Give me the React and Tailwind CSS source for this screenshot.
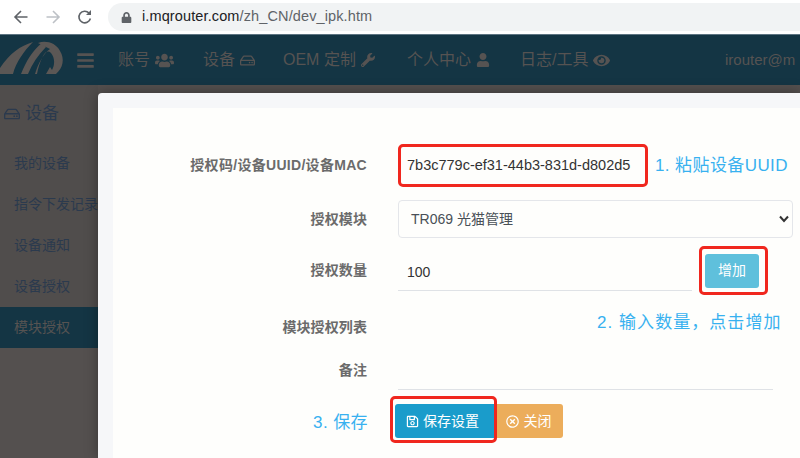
import { FaBars, FaUsers, FaRegHdd, FaWrench, FaUser, FaEye, FaRegSave, FaRegTimesCircle, FaLock } from 'react-icons/fa';

const navItems = [
  { label: '账号', icon: <FaUsers className="text-[19px]" />, width: 'w-[85px]' },
  { label: '设备', icon: <FaRegHdd className="text-[15px]" />, width: 'w-[80px]' },
  { label: 'OEM 定制', icon: <FaWrench className="text-[14px]" />, width: 'w-[124px]' },
  { label: '个人中心', icon: <FaUser className="text-[14px]" />, width: 'w-[113px]' },
  { label: '日志/工具', icon: <FaEye className="text-[17px]" />, width: 'w-[205px]' },
];

const sideItems = ['我的设备', '指令下发记录', '设备通知', '设备授权', '模块授权'];

function Logo() {
  return (
    <svg width="65" height="51" viewBox="0 0 65 51" className="shrink-0">
      <path d="M0 39V33C10 18 20 11 33 7 24 16 16 27 13 39Z" fill="#5b5755" />
      <path d="M21 39C26 26 33 15 42 8L46 12C38 20 32 29 28 39Z" fill="#5b5755" />
      <path d="M35 39C38 29 43 19 50 14 46 12 42 10 38 8 46 5 56 8 60 16 65 24 63 33 56 39H46L50 32 52 35C55 30 55 23 51 18 48 15 45 17 43 21 40 27 38 33 37 39Z" fill="#5b5755" />
    </svg>
  );
}

function FormRow({ label, children, rowClass, labelClass = 'tracking-[0.1px]' }) {
  return (
    <div className={`flex items-center ${rowClass}`}>
      <label className={`w-[255px] shrink-0 pr-[1px] text-right text-[14px] font-bold whitespace-nowrap text-[#6b6b6b] ${labelClass}`}>{label}</label>
      <div className="ml-[30px] min-w-0 flex-1">{children}</div>
    </div>
  );
}

export default function App() {
  return (
    <div className="relative h-[458px] w-[800px] overflow-hidden bg-[#54504f] font-['Liberation_Sans','Noto_Sans_CJK_SC',sans-serif]">
      {/* browser bar */}
      <div className="flex h-[34px] items-center bg-white text-[#5f6368]">
        <svg width="16" height="16" viewBox="0 0 16 16" className="ml-[13px]" fill="none" stroke="#5f6368" strokeWidth="1.6">
          <path d="M14.5 8H2M8 2 2 8l6 6" />
        </svg>
        <svg width="16" height="16" viewBox="0 0 16 16" className="ml-[16px]" fill="none" stroke="#bdc1c6" strokeWidth="1.6">
          <path d="M1.5 8H14M8 2l6 6-6 6" />
        </svg>
        <svg width="16" height="16" viewBox="0 0 16 16" className="ml-[16px]" fill="none" stroke="#5f6368" strokeWidth="1.6">
          <path d="M13.4 9.5A5.8 5.8 0 1 1 12 4" />
          <path d="M14 1v5H9z" fill="#5f6368" stroke="none" />
        </svg>
        <div className="ml-[15px] flex h-[28px] flex-1 items-center rounded-l-full bg-[#f1f3f4] pl-[13px] text-[14.5px] tracking-[0.12px]">
          <FaLock className="text-[11px] text-[#5f6368]" />
          <span className="ml-[10px] text-[#202124]">i.mqrouter.com</span>
          <span className="text-[#5f6368]">/zh_CN/dev_ipk.htm</span>
        </div>
      </div>

      {/* nav */}
      <div className="flex h-[51px] items-center border-t border-[#5d7482] bg-[#143544] text-[16px] text-[#565352]">
        <Logo />
        <FaBars className="ml-[11px] text-[19px]" />
        <div className="ml-[23px] flex">
          {navItems.map((item) => (
            <div key={item.label} className={`flex items-center gap-[5px] ${item.width}`}>
              <span className="whitespace-nowrap">{item.label}</span>
              {item.icon}
            </div>
          ))}
        </div>
        <span className="whitespace-nowrap text-[15px]">irouter@m</span>
      </div>

      {/* sidebar */}
      <div className="w-[98px] bg-[#504d4c] text-[14px] text-[#2b3a4e]">
        <div className="flex h-[58px] items-center gap-[5px] pl-[4px] text-[17px] text-[#2b3a4e]">
          <FaRegHdd className="text-[16px]" />
          <span>设备</span>
        </div>
        {sideItems.map((item) => (
          <div
            key={item}
            className={`flex h-[41px] items-center whitespace-nowrap pl-[14px] ${item === '模块授权' ? 'bg-[#143544] text-[#565352]' : ''}`}
          >
            {item}
          </div>
        ))}
      </div>

      {/* modal */}
      <div className="absolute left-[98px] top-[93px] h-[365px] w-[702px] rounded-tl-[4px] bg-[#f6f7f9] pl-[15px] pt-[15px] shadow-[0_0_14px_rgba(0,0,0,0.35)]">
        <div className="h-full bg-[#fefefc] pr-[7px] pt-[36px]">
          <FormRow label="授权码/设备UUID/设备MAC" rowClass="h-[43px]" labelClass="tracking-[0.3px]">
            <div className="flex items-center">
              <div className="flex h-[43px] w-[250px] shrink-0 items-center rounded-[5px] border-[3px] border-[#f0271e] pl-[6px] text-[14.5px] text-[#333]">
                <span className="whitespace-nowrap">7b3c779c-ef31-44b3-831d-d802d5</span>
              </div>
              <span className="ml-[7px] whitespace-nowrap text-[17px] tracking-[0.4px] text-[#38b1f0]">1. 粘贴设备UUID</span>
            </div>
          </FormRow>

          <FormRow label="授权模块" rowClass="mt-[13px] h-[38px]">
            <div className="flex h-[38px] w-[395px] items-center justify-between rounded-[4px] border border-[#e4e6ea] pl-[12px] pr-[3px] text-[14px] text-[#495057]">
              <span>TR069 光猫管理</span>
              <svg width="10" height="8" viewBox="0 0 10 8" fill="none" stroke="#333" strokeWidth="2">
                <path d="M1 1.500 5 6l4-4.500" />
              </svg>
            </div>
          </FormRow>

          <FormRow label="授权数量" rowClass="mt-[8px] h-[49px]">
            <div className="flex h-[49px] items-center">
              <div className="mb-[4px] flex h-[45px] w-[294px] items-center border-b border-[#dfe2e6] pl-[9px] pt-[8px] text-[14px] text-[#333]">100</div>
              <div className="ml-[7px] flex h-[49px] w-[69px] items-center rounded-[5px] border-[3px] border-[#f0271e] pl-[3px]">
                <button className="h-[34px] w-[54px] rounded-[3px] bg-[#5fc0dc] text-[14px] text-white">增加</button>
              </div>
            </div>
          </FormRow>

          <FormRow label="模块授权列表" rowClass="mt-[22px] h-[20px]">
            <span className="ml-[199px] -mt-[9px] block whitespace-nowrap text-[17px] tracking-[1.05px] text-[#38b1f0]">2. 输入数量，点击增加</span>
          </FormRow>

          <FormRow label="备注" rowClass="mt-[23px] h-[20px]">
            <div className="mt-[19px] h-[20px] w-[375px] border-b border-[#dfe2e6]" />
          </FormRow>

          <div className="mt-[24px] flex h-[34px] items-center">
            <div className="w-[255px] shrink-0 pt-[4px] text-right text-[17px] tracking-[0.4px] text-[#38b1f0]">3. 保存</div>
            <div className="relative ml-[27px] flex h-[34px] items-center">
              <button className="flex h-[34px] w-[99px] items-center justify-center gap-[4px] rounded-l-[3px] bg-[#1a9ccb] pr-[4px] text-[14px] text-white">
                <FaRegSave className="text-[13px]" />
                保存设置
              </button>
              <button className="flex h-[34px] w-[69px] items-center justify-center gap-[5px] rounded-r-[3px] bg-[#ecad5b] text-[14px] text-white">
                <FaRegTimesCircle className="text-[13px]" />
                关闭
              </button>
              <div className="absolute -left-[5px] -top-[8px] h-[47px] w-[107px] rounded-[5px] border-[3px] border-[#f0271e]" />
            </div>
          </div>
        </div>
      </div>
    </div>
  );
}
